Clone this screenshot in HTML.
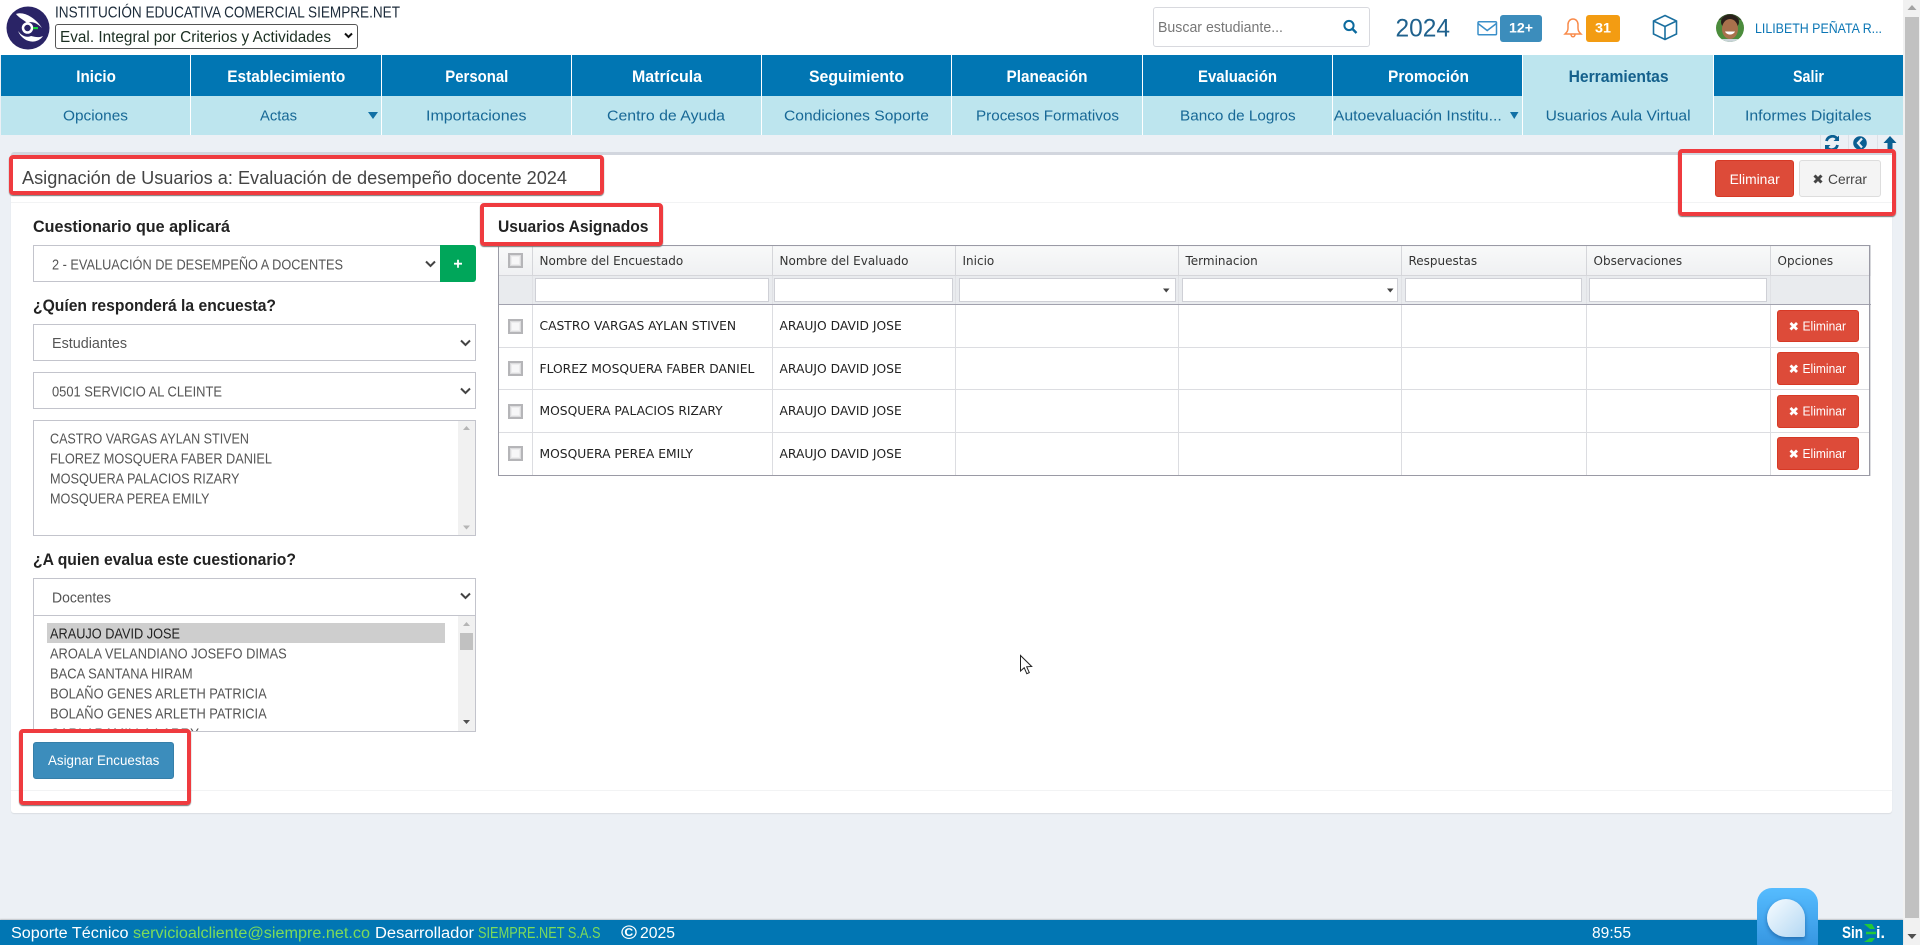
<!DOCTYPE html>
<html lang="es"><head><meta charset="utf-8"><title>Asignación de Usuarios</title>
<style>
*{box-sizing:border-box}
html,body{margin:0;padding:0;width:1920px;height:945px;overflow:hidden;background:#ecf0f5;font-family:"Liberation Sans",sans-serif}
#page{position:relative;width:1920px;height:945px;overflow:hidden;background:#ecf0f5}
.a{position:absolute}
#top{left:0;top:0;width:1903px;height:55px;background:#fff}
.nav{top:55px;height:41px;background:#0176b3;border-right:1px solid #fff}
.sub{top:96px;height:39px;background:#bde5ee;border-right:1px solid #fff}
.hl{background:#bde5ee}
.tb{top:135px;width:1px;height:18px;background:#dde1e7}
.box{background:#fff;border:1px solid #c3c4cc}
.red{border:4px solid #ef3b3f;border-radius:4px;box-shadow:0 1px 1px #777}
table{border-collapse:collapse;table-layout:fixed;font:12px "DejaVu Sans",sans-serif;color:#333}
td,th{padding:0 0 0 6.5px;border:1px solid #dcdde1;overflow:hidden;white-space:nowrap;font-weight:normal;text-align:left}
thead tr.h th{height:30px;background:linear-gradient(#f8f9f9,#eff0f2);border-color:#d5d6da;border-top:1px solid #9a9aa5}
thead tr.f th{height:29px;background:#e9ebee;border-color:#e0e1e5;border-bottom:1px solid #a2a2ae}
tbody td{font-size:12.3px;color:#222}
.o{position:absolute;left:498px;top:245px;width:1372px;height:231px;border:1px solid #9a9aa5;pointer-events:none}
.fi{top:278px;height:24px;background:#fff;border:1px solid #cfd0d6}
.cb{width:15px;height:15px;left:508px;background:#f7f7f8;border:2px solid #b5b5b8;box-shadow:inset 0 0 0 1px #dcdcde,inset 0 0 0 2px #ededee}
.del{left:1777px;width:82px;background:#dd4b39;border:1px solid #d73925;border-radius:3px}
svg text{font-family:"Liberation Sans",sans-serif}
</style></head><body>
<div id="page">

<div class="a" id="top"></div>
<div class="a box" style="left:1153px;top:7px;width:217px;height:40px;border-radius:3px;border-color:#d8d9de"></div>
<div class="a" style="left:55px;top:24px;width:303px;height:25px;border:1px solid #555;border-radius:3px;background:#fff"></div>
<div class="a" style="left:1500px;top:15px;width:42px;height:27px;background:#3c8dbc;border-radius:3px"></div>
<div class="a" style="left:1586px;top:15px;width:34px;height:27px;background:#f39c12;border-radius:3px"></div>

<div class="a nav" style="left:1px;width:190px"></div><div class="a nav" style="left:191px;width:191px"></div><div class="a nav" style="left:382px;width:190px"></div><div class="a nav" style="left:572px;width:190px"></div><div class="a nav" style="left:762px;width:190px"></div><div class="a nav" style="left:952px;width:191px"></div><div class="a nav" style="left:1143px;width:190px"></div><div class="a nav" style="left:1333px;width:190px"></div><div class="a nav hl" style="left:1523px;width:191px"></div><div class="a nav" style="left:1714px;width:189px;border-right:0"></div>
<div class="a sub" style="left:1px;width:190px"></div><div class="a sub" style="left:191px;width:191px"></div><div class="a sub" style="left:382px;width:190px"></div><div class="a sub" style="left:572px;width:190px"></div><div class="a sub" style="left:762px;width:190px"></div><div class="a sub" style="left:952px;width:191px"></div><div class="a sub" style="left:1143px;width:190px"></div><div class="a sub" style="left:1333px;width:190px"></div><div class="a sub" style="left:1523px;width:191px"></div><div class="a sub" style="left:1714px;width:189px;border-right:0"></div>

<div class="a tb" style="left:1820px"></div><div class="a tb" style="left:1848px"></div><div class="a tb" style="left:1877px"></div>

<!-- panel -->
<div class="a" style="left:11px;top:152px;width:1881px;height:661px;background:#fff;border-top:3px solid #d2d6de;border-radius:3px;box-shadow:0 1px 1px rgba(0,0,0,.08)"></div>
<div class="a" style="left:11px;top:202px;width:1881px;height:1px;background:#f2f3f4"></div>
<div class="a" style="left:11px;top:790px;width:1881px;height:1px;background:#f2f3f4"></div>

<div class="a" style="left:1715px;top:160px;width:79px;height:37px;background:#dd4b39;border:1px solid #d73925;border-radius:3px"></div>
<div class="a" style="left:1799px;top:160px;width:82px;height:37px;background:#f4f4f4;border:1px solid #ddd;border-radius:3px"></div>

<!-- form boxes -->
<div class="a box" style="left:33px;top:245px;width:408px;height:37px"></div>
<div class="a" style="left:440px;top:245px;width:36px;height:37px;background:#00a65a;border-radius:0 3px 3px 0"></div>
<div class="a box" style="left:33px;top:324px;width:443px;height:37px"></div>
<div class="a box" style="left:33px;top:372px;width:443px;height:37px"></div>
<div class="a box" style="left:33px;top:420px;width:443px;height:116px"></div>
<div class="a" style="left:458px;top:421px;width:17px;height:114px;background:#f1f1f1"></div>
<div class="a box" style="left:33px;top:578px;width:443px;height:38px"></div>
<div class="a box" style="left:33px;top:615px;width:443px;height:117px"></div>
<div class="a" style="left:47px;top:623px;width:398px;height:20px;background:#cecece"></div>
<div class="a" style="left:458px;top:616px;width:17px;height:115px;background:#f1f1f1"></div>
<div class="a" style="left:460px;top:633px;width:13px;height:17px;background:#c1c1c1"></div>
<div class="a" style="left:33px;top:742px;width:141px;height:37px;background:#3c8dbc;border:1px solid #367fa9;border-radius:3px"></div>

<!-- table -->
<table class="a" style="left:498px;top:245px;width:1372px">
<colgroup><col style="width:34px"><col style="width:240px"><col style="width:183px"><col style="width:223px"><col style="width:223px"><col style="width:185px"><col style="width:184px"><col style="width:100px"></colgroup>
<thead>
<tr class="h"><th></th><th>Nombre del Encuestado</th><th>Nombre del Evaluado</th><th>Inicio</th><th>Terminacion</th><th>Respuestas</th><th>Observaciones</th><th>Opciones</th></tr>
<tr class="f"><th></th><th></th><th></th><th></th><th></th><th></th><th></th><th></th></tr>
</thead>
<tbody>
<tr style="height:43px"><td></td><td>CASTRO VARGAS AYLAN STIVEN</td><td>ARAUJO DAVID JOSE</td><td></td><td></td><td></td><td></td><td></td></tr>
<tr style="height:42px"><td></td><td>FLOREZ MOSQUERA FABER DANIEL</td><td>ARAUJO DAVID JOSE</td><td></td><td></td><td></td><td></td><td></td></tr>
<tr style="height:43px"><td></td><td>MOSQUERA PALACIOS RIZARY</td><td>ARAUJO DAVID JOSE</td><td></td><td></td><td></td><td></td><td></td></tr>
<tr style="height:43px"><td></td><td>MOSQUERA PEREA EMILY</td><td>ARAUJO DAVID JOSE</td><td></td><td></td><td></td><td></td><td></td></tr>
</tbody></table>
<div class="o"></div>
<div class="a fi" style="left:535px;width:234px"></div>
<div class="a fi" style="left:774px;width:179px"></div>
<div class="a fi" style="left:959px;width:217px"></div>
<div class="a fi" style="left:1182px;width:216px"></div>
<div class="a fi" style="left:1405px;width:177px"></div>
<div class="a fi" style="left:1589px;width:178px"></div>
<div class="a cb" style="top:253px"></div><div class="a cb" style="top:319px"></div><div class="a cb" style="top:361px"></div><div class="a cb" style="top:404px"></div><div class="a cb" style="top:446px"></div>
<div class="a del" style="top:310px;height:32px"></div><div class="a del" style="top:352px;height:33px"></div><div class="a del" style="top:395px;height:33px"></div><div class="a del" style="top:437px;height:33px"></div>

<!-- scrollbar -->
<div class="a" style="left:1903px;top:0;width:17px;height:945px;background:#f1f1f1"></div>
<div class="a" style="left:1905px;top:17px;width:14px;height:901px;background:#c1c1c1"></div>

<!-- footer -->
<div class="a" style="left:0;top:920px;width:1903px;height:25px;background:#0176b3;box-shadow:0 -1px 1px rgba(0,0,0,.18)"></div>
<div class="a" style="left:1757px;top:888px;width:61px;height:70px;border-radius:15px;background:linear-gradient(#56bcff,#2f8edb)"></div>
<div class="a" style="left:1767px;top:899px;width:38px;height:38px;border-radius:19px 19px 2px 19px;background:linear-gradient(135deg,#f7fcff,#b4d8f3);box-shadow:0 2px 4px rgba(0,50,110,.45)"></div>

<svg class="a" style="left:0;top:0" width="1920" height="945" viewBox="0 0 1920 945">
<defs><clipPath id="cl"><rect x="34" y="616" width="424" height="115"/></clipPath><clipPath id="av"><circle cx="1730" cy="28" r="14"/></clipPath><clipPath id="tbc"><rect x="1820" y="135" width="83" height="14"/></clipPath></defs>

<!-- logo -->
<circle cx="28" cy="28" r="21.5" fill="#2a2466"/>
<path d="M16 14C23 11 35 17 42 28 36 22 31 21 27 23 24 20 19 18 16 14Z" fill="#fff"/>
<path d="M18 31C22 36 26 38 31 36 35 37 39 38 43 36 37 45 23 43 18 31Z" fill="#fff"/>
<circle cx="27.5" cy="28" r="4.5" fill="#2a2466" stroke="#fff" stroke-width="2.5"/>
<rect x="33" y="27" width="5" height="2.2" fill="#19d43c"/>

<text x="55" y="17.5" font-size="15.5" fill="#1c2b3a" textLength="345" lengthAdjust="spacingAndGlyphs">INSTITUCIÓN EDUCATIVA COMERCIAL SIEMPRE.NET</text>
<text x="60" y="42" font-size="15.5" fill="#1c2f22" textLength="271" lengthAdjust="spacingAndGlyphs">Eval. Integral por Criterios y Actividades</text>
<path d="M345 33.5l3.5 3.5 3.5-3.5" fill="none" stroke="#111" stroke-width="2"/>

<text x="1158" y="32" font-size="14.5" fill="#777" textLength="125" lengthAdjust="spacingAndGlyphs">Buscar estudiante...</text>
<circle cx="1349" cy="25.5" r="4.6" fill="none" stroke="#0b6a9e" stroke-width="2"/><path d="M1352.5 29l4 4" stroke="#0b6a9e" stroke-width="2.4"/>
<text x="1395.5" y="36.7" font-size="25" fill="#1f618d" textLength="54.5" lengthAdjust="spacingAndGlyphs">2024</text>
<rect x="1478" y="21.8" width="18.5" height="13" rx="1" fill="none" stroke="#3a8fc9" stroke-width="1.5"/><path d="M1478 23.5l9.2 7 9.2-7" fill="none" stroke="#3a8fc9" stroke-width="1.5"/>
<text x="1509" y="32.3" font-size="14" font-weight="700" fill="#fff" textLength="24" lengthAdjust="spacingAndGlyphs">12+</text>
<path d="M1565 34c2-2 3-3 3-6v-3.500c0-3 2-5.500 5-5.500s5 2.500 5 5.500V28c0 3 1 4 3 6zM1571 34.500c0 3 4 3 4 0" fill="none" stroke="#f98b4b" stroke-width="1.5"/>
<text x="1595" y="32.3" font-size="14" font-weight="700" fill="#fff" textLength="16" lengthAdjust="spacingAndGlyphs">31</text>
<path d="M1665 15.500l11.500 5.500v13l-11.500 5.500-11.500-5.500v-13zM1653.500 21l11.500 5.500 11.500-5.500M1665 26.500v13" fill="none" stroke="#1a6f9f" stroke-width="1.6"/>
<g clip-path="url(#av)"><rect x="1716" y="14" width="28" height="28" fill="#4b8c3c"/><rect x="1716" y="14" width="28" height="6" fill="#3a4f2c"/><ellipse cx="1730" cy="22" rx="9" ry="7.500" fill="#2a201a"/><ellipse cx="1730" cy="29" rx="8" ry="10" fill="#a8714c"/><path d="M1725 31.500c2 4 8 4 10 0z" fill="#fff"/><rect x="1722" y="39" width="16" height="4" fill="#c8d3d8"/></g>
<text x="1755" y="33" font-size="13.5" fill="#0b76b5" textLength="127" lengthAdjust="spacingAndGlyphs">LILIBETH PEÑATA R...</text>

<!-- main nav -->
<g font-size="16.5" font-weight="700" fill="#fff">
<text x="76.300" y="82" textLength="39.6" lengthAdjust="spacingAndGlyphs">Inicio</text>
<text x="227.300" y="82" textLength="118" lengthAdjust="spacingAndGlyphs">Establecimiento</text>
<text x="445.300" y="82" textLength="63" lengthAdjust="spacingAndGlyphs">Personal</text>
<text x="632" y="82" textLength="70" lengthAdjust="spacingAndGlyphs">Matrícula</text>
<text x="809" y="82" textLength="95" lengthAdjust="spacingAndGlyphs">Seguimiento</text>
<text x="1006.500" y="82" textLength="81" lengthAdjust="spacingAndGlyphs">Planeación</text>
<text x="1198" y="82" textLength="79" lengthAdjust="spacingAndGlyphs">Evaluación</text>
<text x="1388" y="82" textLength="81" lengthAdjust="spacingAndGlyphs">Promoción</text>
<text x="1568.600" y="82" textLength="100" lengthAdjust="spacingAndGlyphs" fill="#14608c">Herramientas</text>
<text x="1793" y="82" textLength="31" lengthAdjust="spacingAndGlyphs">Salir</text>
</g>
<!-- sub nav -->
<g font-size="14.5" fill="#176896">
<text x="63" y="120.700" textLength="65" lengthAdjust="spacingAndGlyphs">Opciones</text>
<text x="260" y="120.700" textLength="37" lengthAdjust="spacingAndGlyphs">Actas</text>
<text x="426" y="120.700" textLength="100.500" lengthAdjust="spacingAndGlyphs">Importaciones</text>
<text x="607" y="120.700" textLength="118" lengthAdjust="spacingAndGlyphs">Centro de Ayuda</text>
<text x="784" y="120.700" textLength="145" lengthAdjust="spacingAndGlyphs">Condiciones Soporte</text>
<text x="976" y="120.700" textLength="143" lengthAdjust="spacingAndGlyphs">Procesos Formativos</text>
<text x="1180" y="120.700" textLength="115.600" lengthAdjust="spacingAndGlyphs">Banco de Logros</text>
<text x="1333.800" y="120.700" textLength="168" lengthAdjust="spacingAndGlyphs">Autoevaluación Institu...</text>
<text x="1545.600" y="120.700" textLength="145" lengthAdjust="spacingAndGlyphs">Usuarios Aula Virtual</text>
<text x="1745" y="120.700" textLength="126.500" lengthAdjust="spacingAndGlyphs">Informes Digitales</text>
</g>
<path d="M368 112h10l-5 7zM1510 112h8.500l-4.250 7z" fill="#1170a5"/>

<!-- toolbar icons -->
<g clip-path="url(#tbc)">
<path d="M1826.500 141a6 6 0 0 1 10.500-2.500M1837.500 145a6 6 0 0 1-10.500 2.500" fill="none" stroke="#0b5f92" stroke-width="2.800"/><path d="M1839 135.500v5.500h-5.500zM1825 150.500v-5.500h5.500z" fill="#0b5f92"/>
<circle cx="1860" cy="143" r="6.800" fill="#0b5f92"/><path d="M1862 138.500l-4 4.500 4 4.500" fill="none" stroke="#ecf0f5" stroke-width="2.200"/>
<path d="M1890 136l-6.500 7h4v7h5v-7h4z" fill="#0b5f92"/>
</g>

<!-- title -->
<text x="22" y="184" font-size="18" fill="#444" textLength="545" lengthAdjust="spacingAndGlyphs">Asignación de Usuarios a: Evaluación de desempeño docente 2024</text>
<text x="1729.700" y="184" font-size="13.5" fill="#fff" textLength="50" lengthAdjust="spacingAndGlyphs">Eliminar</text>
<path d="M1814.500 175.500l7 7M1821.500 175.500l-7 7" stroke="#444" stroke-width="3"/>
<text x="1828" y="184" font-size="14" fill="#444" textLength="39" lengthAdjust="spacingAndGlyphs">Cerrar</text>

<!-- labels -->
<g font-size="16.500" font-weight="700" fill="#222">
<text x="33" y="232" textLength="197" lengthAdjust="spacingAndGlyphs">Cuestionario que aplicará</text>
<text x="33" y="311" textLength="243" lengthAdjust="spacingAndGlyphs">¿Quíen responderá la encuesta?</text>
<text x="33" y="565" textLength="263" lengthAdjust="spacingAndGlyphs">¿A quien evalua este cuestionario?</text>
<text x="498" y="232" textLength="150.500" lengthAdjust="spacingAndGlyphs">Usuarios Asignados</text>
</g>
<!-- selects -->
<g font-size="14.500" fill="#555">
<text x="52" y="269.300" textLength="291" lengthAdjust="spacingAndGlyphs">2 - EVALUACIÓN DE DESEMPEÑO A DOCENTES</text>
<text x="52" y="348" textLength="75" lengthAdjust="spacingAndGlyphs">Estudiantes</text>
<text x="52" y="396.700" textLength="170" lengthAdjust="spacingAndGlyphs">0501 SERVICIO AL CLEINTE</text>
<text x="50" y="443.700" textLength="199" lengthAdjust="spacingAndGlyphs">CASTRO VARGAS AYLAN STIVEN</text>
<text x="50" y="463.700" textLength="222" lengthAdjust="spacingAndGlyphs">FLOREZ MOSQUERA FABER DANIEL</text>
<text x="50" y="483.700" textLength="189.500" lengthAdjust="spacingAndGlyphs">MOSQUERA PALACIOS RIZARY</text>
<text x="50" y="503.700" textLength="159.500" lengthAdjust="spacingAndGlyphs">MOSQUERA PEREA EMILY</text>
<text x="52" y="602.300" textLength="59" lengthAdjust="spacingAndGlyphs">Docentes</text>
<g clip-path="url(#cl)">
<text x="50" y="638.300" fill="#222" textLength="130" lengthAdjust="spacingAndGlyphs">ARAUJO DAVID JOSE</text>
<text x="50" y="658.300" textLength="236.700" lengthAdjust="spacingAndGlyphs">AROALA VELANDIANO JOSEFO DIMAS</text>
<text x="50" y="678.300" textLength="142.700" lengthAdjust="spacingAndGlyphs">BACA SANTANA HIRAM</text>
<text x="50" y="698.300" textLength="216.700" lengthAdjust="spacingAndGlyphs">BOLAÑO GENES ARLETH PATRICIA</text>
<text x="50" y="718.300" textLength="216.700" lengthAdjust="spacingAndGlyphs">BOLAÑO GENES ARLETH PATRICIA</text>
<text x="50" y="738.300" textLength="149" lengthAdjust="spacingAndGlyphs">CARLARAMILLA LARRY</text>
</g></g>
<g fill="none" stroke="#444" stroke-width="2"><path d="M426 261.500l4.500 4.500 4.500-4.500M461 340.500l4.500 4.500 4.500-4.500M461 388.500l4.500 4.500 4.500-4.500M461 593.500l4.500 4.500 4.500-4.500"/></g>
<path d="M454 263.700h8M458 259.700v8" stroke="#fff" stroke-width="1.800"/>
<path d="M466.500 426l-3.500 4h7zM466.500 529.500l-3.500-4h7z" fill="#b5b5b5"/>
<path d="M466.500 622l-3.500 4h7z" fill="#b5b5b5"/><path d="M466.500 724l-3.500-4h7z" fill="#505050"/>
<text x="48" y="765" font-size="14" fill="#fff" textLength="111.300" lengthAdjust="spacingAndGlyphs">Asignar Encuestas</text>

<!-- table overlays -->
<path d="M1163 288.500h6.500l-3.250 4zM1387 288.500h6.500l-3.250 4z" fill="#444"/>
<g stroke="#fff" stroke-width="2.800"><path d="M1790.500 323l6.500 6.500M1797 323l-6.500 6.500M1790.500 365.500l6.500 6.500M1797 365.500l-6.500 6.500M1790.500 408l6.500 6.500M1797 408l-6.500 6.500M1790.500 450.500l6.500 6.500M1797 450.500l-6.500 6.500"/></g>
<g font-size="12.500" fill="#fff">
<text x="1802.500" y="330.500" textLength="43.500" lengthAdjust="spacingAndGlyphs">Eliminar</text>
<text x="1802.500" y="373" textLength="43.500" lengthAdjust="spacingAndGlyphs">Eliminar</text>
<text x="1802.500" y="415.500" textLength="43.500" lengthAdjust="spacingAndGlyphs">Eliminar</text>
<text x="1802.500" y="458" textLength="43.500" lengthAdjust="spacingAndGlyphs">Eliminar</text>
</g>

<!-- cursor -->
<path d="M1020.500 655.500v15.500l3.700-3.300 2.600 6 2.500-1.100-2.600-5.800 5-.3z" fill="#fff" stroke="#222" stroke-width="1"/>

<!-- scrollbar arrows -->
<path d="M1912 5l-4.500 5h9z" fill="#a3a3a3"/><path d="M1912 939l-4.500-5h9z" fill="#505050"/>

<!-- footer -->
<g font-size="15.500">
<text x="11" y="938" fill="#fff" textLength="117.500" lengthAdjust="spacingAndGlyphs">Soporte Técnico</text>
<text x="133" y="938" fill="#7ddb5a" textLength="237" lengthAdjust="spacingAndGlyphs">servicioalcliente@siempre.net.co</text>
<text x="375" y="938" fill="#fff" textLength="99" lengthAdjust="spacingAndGlyphs">Desarrollador</text>
<text x="478" y="938" fill="#7ddb5a" textLength="122.500" lengthAdjust="spacingAndGlyphs">SIEMPRE.NET S.A.S</text>
<text x="621" y="939" fill="#fff" font-size="19" font-weight="700" textLength="16" lengthAdjust="spacingAndGlyphs">©</text>
<text x="640" y="938" fill="#fff" textLength="35" lengthAdjust="spacingAndGlyphs">2025</text>
<text x="1592" y="938" fill="#fff" font-size="16" textLength="39" lengthAdjust="spacingAndGlyphs">89:55</text>
</g>
<path d="M1864 924l6 5 5 0-3-5zM1864 942l6-4 5 0-3 4z" fill="#22c93a"/><path d="M1866 933h10" stroke="#22c93a" stroke-width="2.500"/>
<text x="1842" y="938" font-size="17" font-weight="700" fill="#fff" textLength="21" lengthAdjust="spacingAndGlyphs">Sin</text>
<text x="1876" y="938" font-size="17" font-weight="700" fill="#fff" textLength="9" lengthAdjust="spacingAndGlyphs">i.</text>
</svg>

<!-- annotations -->
<div class="a red" style="left:9px;top:155px;width:595px;height:39.500px"></div>
<div class="a red" style="left:1678px;top:149px;width:218px;height:67px"></div>
<div class="a red" style="left:480px;top:203px;width:183px;height:43px"></div>
<div class="a red" style="left:19px;top:729px;width:172px;height:76px"></div>
</div>
</body></html>
